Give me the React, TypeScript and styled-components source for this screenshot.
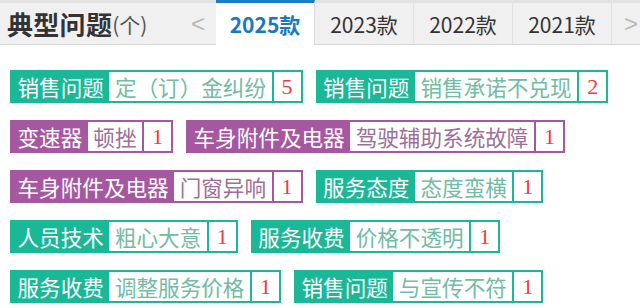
import React from 'react';
import styled, { createGlobalStyle } from 'styled-components';

const GlobalStyle = createGlobalStyle`
  html, body {
    margin: 0;
    padding: 0;
    background: #ffffff;
    font-family: "Noto Sans CJK SC", "Noto Sans", sans-serif;
  }
`;

const palette = {
  teal: { main: '#1bb897', text: '#72bba4' },
  purple: { main: '#a5589f', text: '#9d6f99' },
};

type Tone = keyof typeof palette;

interface Issue {
  category: string;
  detail: string;
  count: number;
  tone: Tone;
}

const issues: Issue[] = [
  { category: '销售问题', detail: '定（订）金纠纷', count: 5, tone: 'teal' },
  { category: '销售问题', detail: '销售承诺不兑现', count: 2, tone: 'teal' },
  { category: '变速器', detail: '顿挫', count: 1, tone: 'purple' },
  { category: '车身附件及电器', detail: '驾驶辅助系统故障', count: 1, tone: 'purple' },
  { category: '车身附件及电器', detail: '门窗异响', count: 1, tone: 'purple' },
  { category: '服务态度', detail: '态度蛮横', count: 1, tone: 'teal' },
  { category: '人员技术', detail: '粗心大意', count: 1, tone: 'teal' },
  { category: '服务收费', detail: '价格不透明', count: 1, tone: 'teal' },
  { category: '服务收费', detail: '调整服务价格', count: 1, tone: 'teal' },
  { category: '销售问题', detail: '与宣传不符', count: 1, tone: 'teal' },
];

const years = ['2025款', '2023款', '2022款', '2021款'];

const Page = styled.div`
  width: 640px;
  height: 308px;
  overflow: hidden;
`;

const Header = styled.div`
  display: flex;
  align-items: stretch;
  height: 45px;
  box-sizing: border-box;
  background: #f0f0f0;
  border-top: 3px solid #e3e3e3;
  border-bottom: 1px solid #d6d6d6;
`;

const Title = styled.div`
  width: 180px;
  flex: none;
  display: flex;
  align-items: center;
  padding-left: 7px;
  box-sizing: border-box;
  color: #333333;
`;

const TitleMain = styled.span`
  font-size: 26px;
  font-weight: 700;
  letter-spacing: 0.3px;
`;

const TitleUnit = styled.span`
  font-size: 21px;
  color: #555555;
`;

const Arrow = styled.div<{ $side: 'left' | 'right' }>`
  width: ${(p) => (p.$side === 'left' ? '36px' : '26px')};
  flex: none;
  display: flex;
  align-items: center;
  justify-content: ${(p) => (p.$side === 'left' ? 'center' : 'flex-end')};
  color: #b8b8b8;
  font-family: "Liberation Sans", sans-serif;
  font-size: 24px;
  overflow: hidden;
`;

const Tabs = styled.div`
  display: flex;
  flex: none;
`;

const Tab = styled.div<{ $active?: boolean }>`
  width: 99px;
  box-sizing: border-box;
  display: flex;
  align-items: center;
  justify-content: center;
  font-size: 21px;
  margin-top: ${(p) => (p.$active ? '-3px' : '0')};
  margin-bottom: ${(p) => (p.$active ? '-1px' : '0')};
  border-top: ${(p) => (p.$active ? '3px solid #1a7dc9' : 'none')};
  border-right: 1px solid ${(p) => (p.$active ? '#dcdcdc' : '#e2e2e2')};
  background: ${(p) => (p.$active ? '#ffffff' : 'transparent')};
  color: ${(p) => (p.$active ? '#1a78c2' : '#333333')};
  font-weight: ${(p) => (p.$active ? 700 : 400)};
`;

const TagList = styled.div`
  display: flex;
  flex-wrap: wrap;
  column-gap: 13px;
  row-gap: 17px;
  padding: 25px 0 0 10px;
`;

const Tag = styled.div<{ $tone: Tone }>`
  display: flex;
  height: 33px;
  box-sizing: border-box;
  border: 2px solid ${(p) => palette[p.$tone].main};
  font-size: 21.6px;
  line-height: 29px;
`;

const Category = styled.span<{ $tone: Tone }>`
  padding: 0 5.5px;
  background: ${(p) => palette[p.$tone].main};
  color: #ffffff;
`;

const Detail = styled.span<{ $tone: Tone }>`
  padding: 0 5.5px;
  background: #ffffff;
  color: ${(p) => palette[p.$tone].text};
`;

const Count = styled.span<{ $tone: Tone }>`
  width: 27px;
  text-align: center;
  border-left: 2px solid ${(p) => palette[p.$tone].main};
  background: #ffffff;
  color: #ee3a40;
  font-family: "Liberation Serif", serif;
  font-size: 22px;
`;

export default function App() {
  return (
    <Page>
      <GlobalStyle />
      <Header>
        <Title>
          <TitleMain>典型问题</TitleMain>
          <TitleUnit>(个)</TitleUnit>
        </Title>
        <Arrow $side="left">&lt;</Arrow>
        <Tabs>
          {years.map((y, i) => (
            <Tab key={y} $active={i === 0}>{y}</Tab>
          ))}
        </Tabs>
        <Arrow $side="right">&gt;</Arrow>
      </Header>
      <TagList>
        {issues.map((it) => (
          <Tag key={it.category + it.detail} $tone={it.tone}>
            <Category $tone={it.tone}>{it.category}</Category>
            <Detail $tone={it.tone}>{it.detail}</Detail>
            <Count $tone={it.tone}>{it.count}</Count>
          </Tag>
        ))}
      </TagList>
    </Page>
  );
}
